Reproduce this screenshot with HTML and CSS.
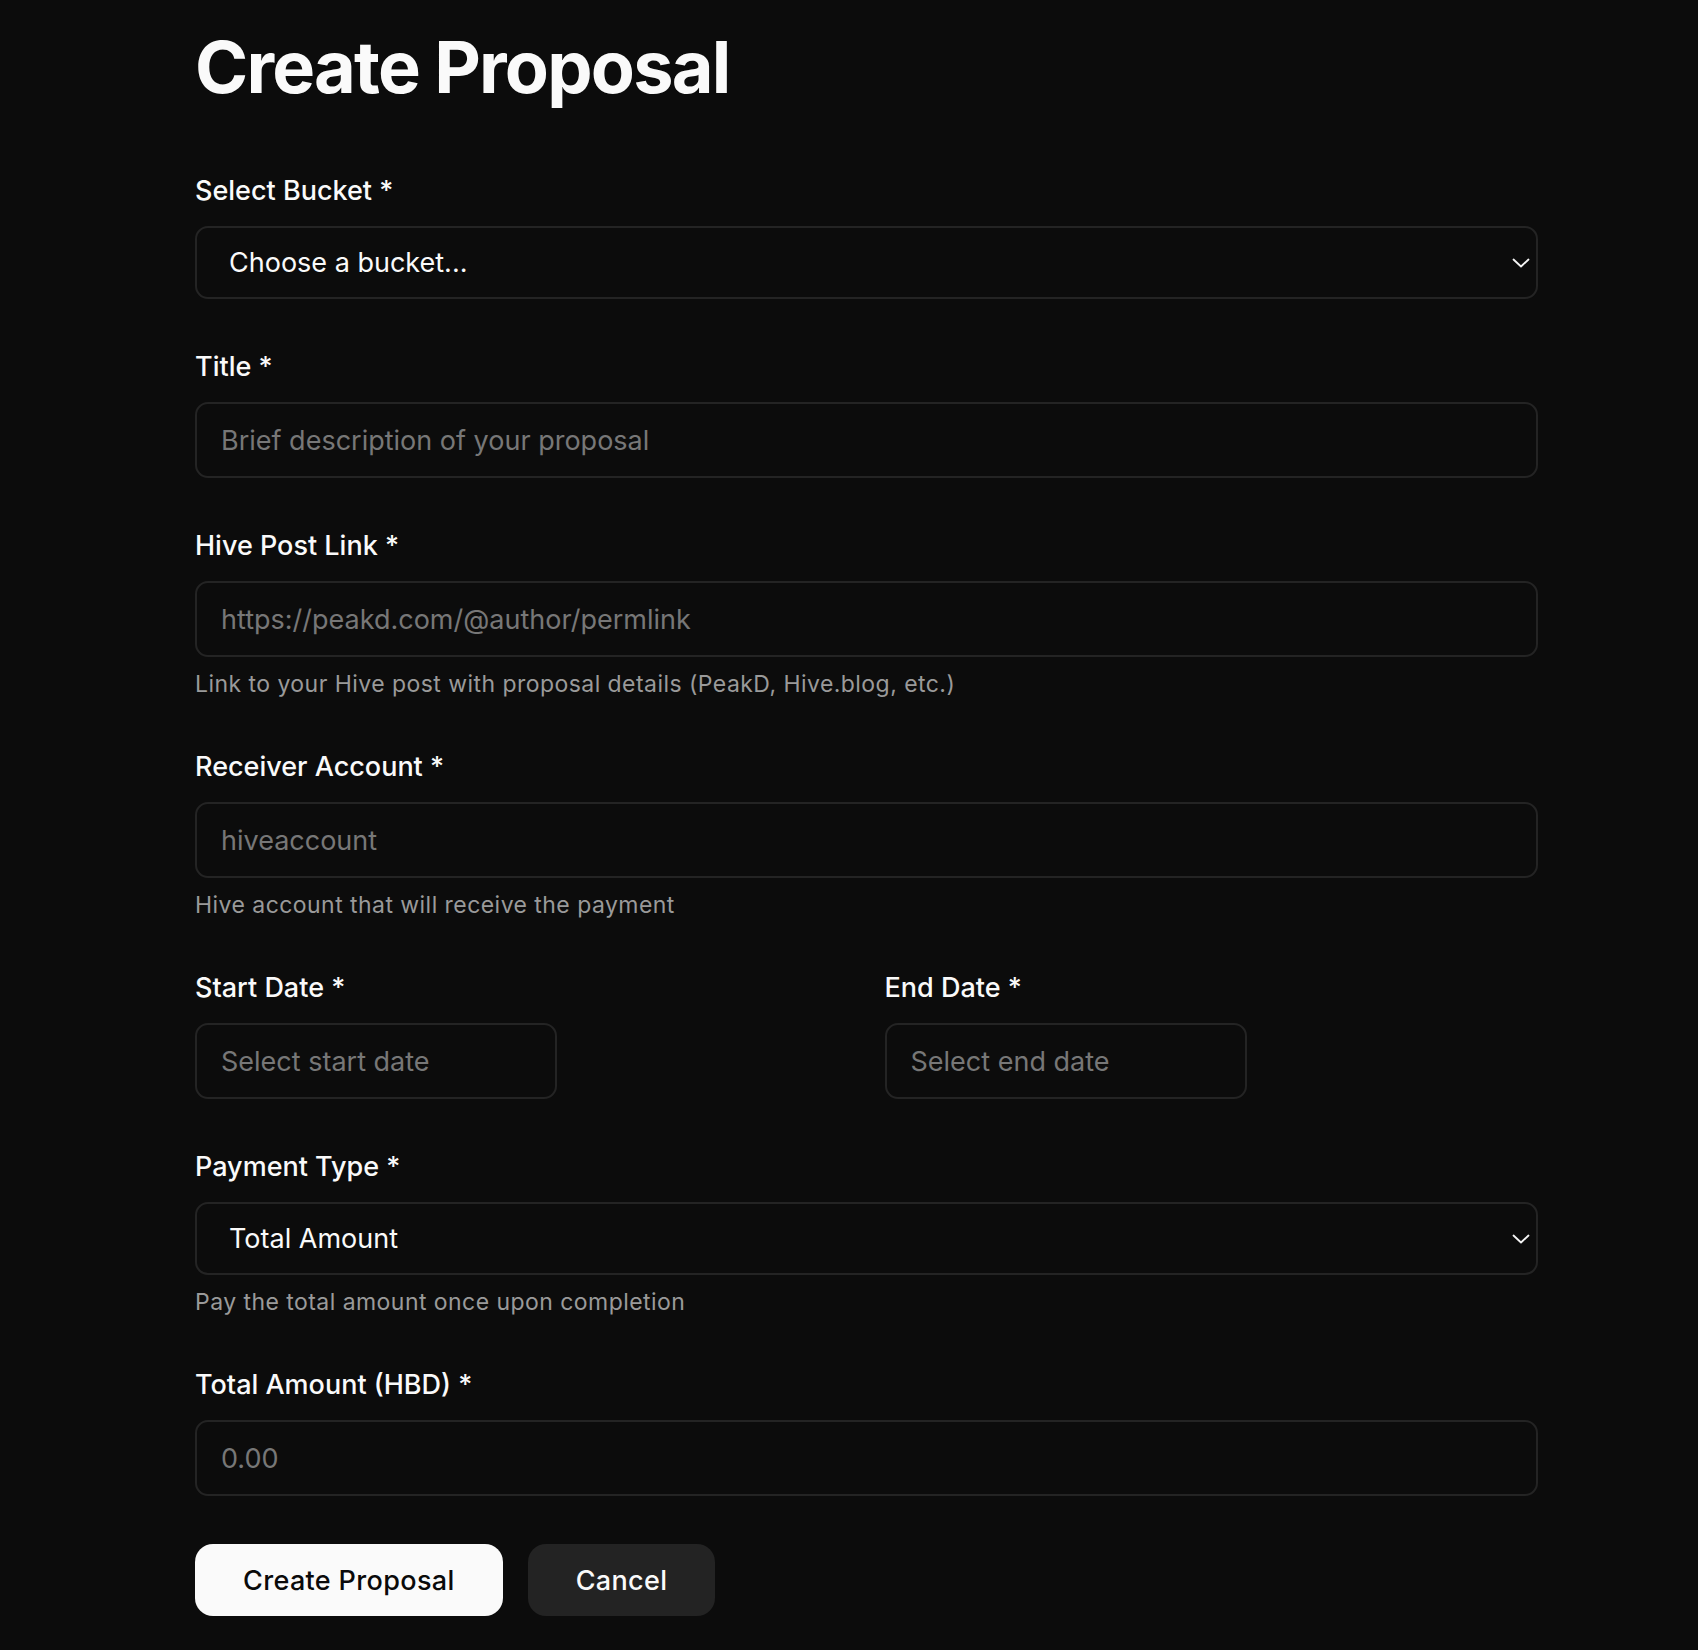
FILE: index.html
```html
<!DOCTYPE html>
<html lang="en">
<head>
    <meta charset="UTF-8">
    <meta name="viewport" content="width=device-width, initial-scale=1.0">
    <title>Create Proposal</title>
    <link rel="stylesheet" href="styles.css">
</head>
<body>

<div class="page">
    <h1 class="page-title">Create Proposal</h1>

    <form id="proposalForm" class="proposal-form">
        <div class="form-group">
            <label for="bucket">Select Bucket *</label>
            <div class="select-wrap">
                <select id="bucket" name="bucket">
                    <option value="">Choose a bucket...</option>
                </select>
                <svg class="chevron" width="18" height="10" viewBox="0 0 18 10" fill="none">
                    <path d="M1.5 1.5 L9 8.5 L16.5 1.5" stroke="#f5f5f5" stroke-width="1.8" stroke-linecap="round" stroke-linejoin="round"/>
                </svg>
            </div>
        </div>

        <div class="form-group">
            <label for="title">Title *</label>
            <input type="text" id="title" name="title" placeholder="Brief description of your proposal">
        </div>

        <div class="form-group">
            <label for="postLink">Hive Post Link *</label>
            <input type="text" id="postLink" name="postLink" placeholder="https://peakd.com/@author/permlink">
            <p class="hint">Link to your Hive post with proposal details (PeakD, Hive.blog, etc.)</p>
        </div>

        <div class="form-group">
            <label for="receiver">Receiver Account *</label>
            <input type="text" id="receiver" name="receiver" placeholder="hiveaccount">
            <p class="hint">Hive account that will receive the payment</p>
        </div>

        <div class="form-row">
            <div class="form-group">
                <label for="startDate">Start Date *</label>
                <input type="text" id="startDate" name="startDate" class="date-input" placeholder="Select start date">
            </div>
            <div class="form-group">
                <label for="endDate">End Date *</label>
                <input type="text" id="endDate" name="endDate" class="date-input" placeholder="Select end date">
            </div>
        </div>

        <div class="form-group">
            <label for="paymentType">Payment Type *</label>
            <div class="select-wrap">
                <select id="paymentType" name="paymentType">
                    <option value="total">Total Amount</option>
                    <option value="monthly">Monthly</option>
                </select>
                <svg class="chevron" width="18" height="10" viewBox="0 0 18 10" fill="none">
                    <path d="M1.5 1.5 L9 8.5 L16.5 1.5" stroke="#f5f5f5" stroke-width="1.8" stroke-linecap="round" stroke-linejoin="round"/>
                </svg>
            </div>
            <p class="hint">Pay the total amount once upon completion</p>
        </div>

        <div class="form-group">
            <label for="amount">Total Amount (HBD) *</label>
            <input type="text" id="amount" name="amount" placeholder="0.00">
        </div>

        <div class="actions">
            <button type="submit" class="btn btn-primary">Create Proposal</button>
            <button type="button" class="btn btn-secondary">Cancel</button>
        </div>
    </form>
</div>

</body>
</html>
```

FILE: styles.css
```css
body {
    background-color: #0c0c0c;
    color: #fafafa;
    font-family: "Inter", "Liberation Sans", sans-serif;
    margin: 0;
}
.page {
    width: 1343px;
    margin-left: 195px;
    padding-top: 31px;
    padding-bottom: 34px;
}
.page-title {
    font-size: 72px;
    line-height: 72px;
    font-weight: 700;
    letter-spacing: -1.8px;
    margin: 0 0 68px 0;
}
.proposal-form {
    display: flex;
    flex-direction: column;
    gap: 48px;
}
.form-group label {
    display: block;
    font-size: 27px;
    line-height: 40px;
    font-weight: 500;
    margin-bottom: 15px;
}
.form-group input,
.form-group select {
    width: 100%;
    box-sizing: border-box;
    height: 76px;
    padding: 0 24px;
    background-color: #0c0c0c;
    color: #fafafa;
    border: 2px solid #242424;
    border-radius: 13px;
    font-family: inherit;
    font-size: 27px;
    outline: none;
}
.form-group input::placeholder {
    color: #777777;
}
.select-wrap {
    position: relative;
}
.form-group select {
    height: 73px;
    padding-left: 32px;
    appearance: none;
    -webkit-appearance: none;
}
.chevron {
    position: absolute;
    right: 8px;
    top: 32px;
    pointer-events: none;
}
.hint {
    margin: 12px 0 0 0;
    font-size: 23px;
    line-height: 30px;
    letter-spacing: 0.45px;
    color: #9a9a9a;
}
.form-row {
    display: grid;
    grid-template-columns: 1fr 1fr;
    gap: 36px;
}
.form-group .date-input {
    width: 362px;
}
.actions {
    display: flex;
    gap: 25px;
}
.btn {
    height: 72px;
    padding: 0 48px;
    border: none;
    border-radius: 18px;
    font-family: inherit;
    font-size: 27px;
    font-weight: 500;
    letter-spacing: 0.35px;
}
.btn-primary {
    background-color: #fafafa;
    color: #0a0a0a;
}
.btn-secondary {
    background-color: #232323;
    color: #fafafa;
}
```
